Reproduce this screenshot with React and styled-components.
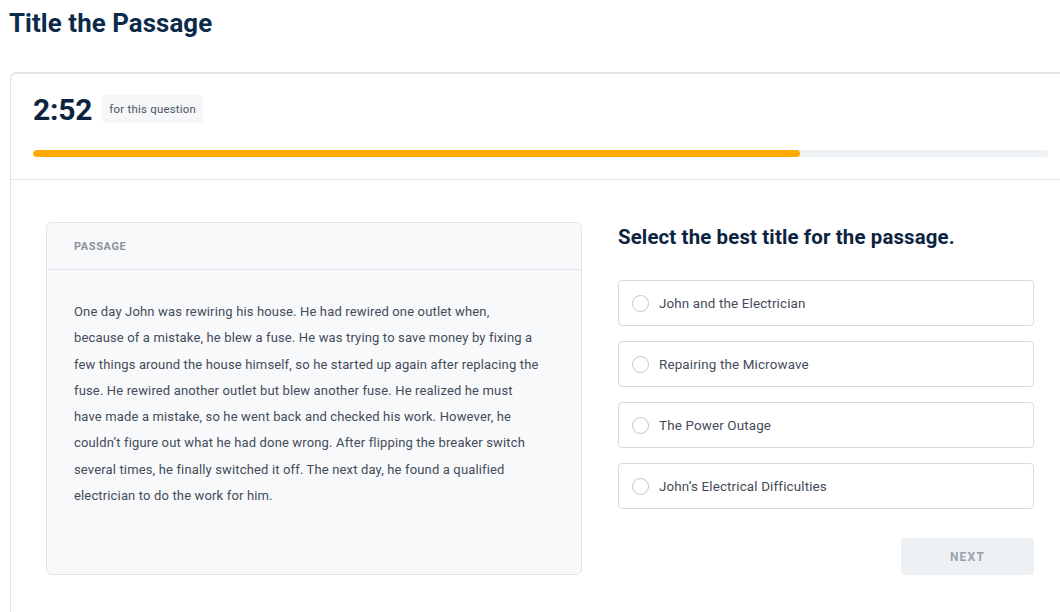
import React from "react";
import styled, { createGlobalStyle } from "styled-components";

const Global = createGlobalStyle`
  html, body { margin: 0; padding: 0; background: #fff; overflow: hidden; }
  body { font-family: Roboto, "Noto Sans", "Liberation Sans", sans-serif; color: #0b2545; }
  * { box-sizing: border-box; }
`;

const Page = styled.div`
  width: 1060px;
  height: 612px;
  overflow: hidden;
  padding: 8px 0 0 10px;
`;

const Title = styled.h1`
  margin: 0 0 0 -1px;
  font-size: 25.8px;
  line-height: 30px;
  font-weight: 700;
  color: #0c2a4a;
  letter-spacing: 0.1px;
`;

const Card = styled.section`
  margin-top: 34px;
  width: 1080px;
  border: 1px solid #dfe2e6;
  border-top: 2px solid #dfe2e6;
  border-radius: 7px 0 0 0;
  background: #fff;
`;

const TimerArea = styled.div`
  padding: 20px 12px 22px 22px;
  border-bottom: 1px solid #e6e8eb;
  width: 1050px;
`;

const TimerRow = styled.div`
  display: flex;
  align-items: center;
  gap: 10px;
  height: 30px;
`;

const Time = styled.span`
  font-size: 30px;
  font-weight: 700;
  color: #0c2340;
  letter-spacing: -0.2px;
`;

const Chip = styled.span`
  background: #f5f7f9;
  border-radius: 4px;
  font-size: 11.4px;
  color: #4a5563;
  padding: 7px 7px;
  letter-spacing: 0.25px;
`;

const Track = styled.div`
  margin-top: 26px;
  height: 7px;
  border-radius: 4px;
  background: #eff2f5;
  overflow: hidden;
  margin-right: 1px;
`;

const Fill = styled.div`
  height: 100%;
  border-radius: 4px;
  background: #ffab00;
`;

const Body = styled.div`
  display: flex;
  gap: 36px;
  padding: 42px 0 0 35px;
  height: 440px;
`;

const PassageBox = styled.div`
  width: 536px;
  height: 353px;
  background: #f8f9fb;
  border: 1px solid #e1e5ea;
  border-radius: 6px;
`;

const PassageHead = styled.div`
  height: 47px;
  display: flex;
  align-items: center;
  padding-left: 27px;
  border-bottom: 1px solid #e3e6ea;
  font-size: 11px;
  font-weight: 700;
  letter-spacing: 0.6px;
  color: #8a939e;
`;

const PassageText = styled.p`
  margin: 0;
  padding: 29px 10px 0 27px;
  font-size: 13px;
  line-height: 26.3px;
  color: #434c59;
  letter-spacing: 0.15px;
  white-space: nowrap;
`;

const Right = styled.div`
  width: 416px;
  display: flex;
  flex-direction: column;
`;

const Question = styled.h2`
  margin: 0;
  font-size: 20.4px;
  line-height: 26px;
  font-weight: 700;
  color: #0c2340;
  letter-spacing: 0.15px;
  padding-top: 2px;
`;

const Options = styled.div`
  margin-top: 30px;
  display: flex;
  flex-direction: column;
  gap: 15px;
`;

const Option = styled.label`
  height: 46px;
  display: flex;
  align-items: center;
  gap: 10px;
  padding-left: 13px;
  border: 1px solid #d7dbe0;
  border-radius: 4px;
  background: #fff;
  font-size: 13.4px;
  color: #434c59;
  letter-spacing: 0.15px;
  cursor: pointer;
`;

const Radio = styled.span`
  width: 17px;
  height: 17px;
  border-radius: 50%;
  border: 1px solid #c0c7cf;
  background: #fff;
  flex: none;
`;

const Footer = styled.div`
  display: flex;
  justify-content: flex-end;
  margin-top: 29px;
`;

const NextButton = styled.button`
  width: 133px;
  height: 37px;
  border: none;
  border-radius: 3px;
  background: #eef1f4;
  color: #98a1ac;
  font-family: inherit;
  font-size: 12px;
  font-weight: 700;
  letter-spacing: 1.2px;
`;

const options = [
  "John and the Electrician",
  "Repairing the Microwave",
  "The Power Outage",
  "John\u2019s Electrical Difficulties",
];

const passageLines = [
  "One day John was rewiring his house. He had rewired one outlet when,",
  "because of a mistake, he blew a fuse. He was trying to save money by fixing a",
  "few things around the house himself, so he started up again after replacing the",
  "fuse. He rewired another outlet but blew another fuse. He realized he must",
  "have made a mistake, so he went back and checked his work. However, he",
  "couldn\u2019t figure out what he had done wrong. After flipping the breaker switch",
  "several times, he finally switched it off. The next day, he found a qualified",
  "electrician to do the work for him.",
];

export default function App() {
  return (
    <>
      <Global />
      <Page>
        <Title>Title the Passage</Title>
        <Card>
          <TimerArea>
            <TimerRow>
              <Time>2:52</Time>
              <Chip>for this question</Chip>
            </TimerRow>
            <Track>
              <Fill style={{ width: `${(768 / 1016) * 100}%` }} />
            </Track>
          </TimerArea>
          <Body>
            <PassageBox>
              <PassageHead>PASSAGE</PassageHead>
              <PassageText>
                {passageLines.map((line, i) => (
                  <React.Fragment key={i}>
                    {line}
                    {i < passageLines.length - 1 && <br />}
                  </React.Fragment>
                ))}
              </PassageText>
            </PassageBox>
            <Right>
              <Question>Select the best title for the passage.</Question>
              <Options>
                {options.map((o) => (
                  <Option key={o}>
                    <Radio />
                    {o}
                  </Option>
                ))}
              </Options>
              <Footer>
                <NextButton>NEXT</NextButton>
              </Footer>
            </Right>
          </Body>
        </Card>
      </Page>
    </>
  );
}
